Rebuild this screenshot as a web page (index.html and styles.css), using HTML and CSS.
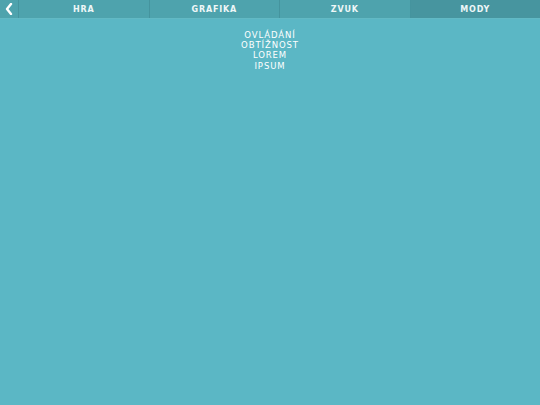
FILE: index.html
```html
<!DOCTYPE html>
<html>
<head>
<meta charset="utf-8">
<link rel="stylesheet" href="styles.css">
</head>
<body>
<div class="topbar">
  <div class="back"><svg width="8" height="12" viewBox="0 0 8 12"><path d="M6 1 L2 6 L6 11" fill="none" stroke="#ffffff" stroke-width="2.4" stroke-linecap="round" stroke-linejoin="round"/></svg></div>
  <div class="tab">HRA</div>
  <div class="tab">GRAFIKA</div>
  <div class="tab">ZVUK</div>
  <div class="tab active">MODY</div>
</div>
<div class="menu">
  <div class="item">OVLÁDÁNÍ</div>
  <div class="item">OBTÍŽNOST</div>
  <div class="item">LOREM</div>
  <div class="item">IPSUM</div>
</div>
</body>
</html>
```
FILE: styles.css
```css
html, body {
  margin: 0;
  padding: 0;
  width: 540px;
  height: 405px;
  background: #5bb7c5;
  font-family: "DejaVu Sans", "Verdana", sans-serif;
  color: #ffffff;
  overflow: hidden;
}
.topbar {
  display: flex;
  height: 18px;
  background: #4ea3ad;
  border-bottom: 1px solid #62b9c4;
}
.back {
  width: 19px;
  display: flex;
  align-items: center;
  justify-content: center;
  border-right: 1px solid #45949e;
  box-sizing: border-box;
}
.tab {
  flex: 1;
  display: flex;
  align-items: center;
  justify-content: center;
  font-size: 8px;
  font-weight: bold;
  letter-spacing: 0.8px;
  border-right: 1px solid #45949e;
  color: #eef7f8;
}
.tab:last-child { border-right: none; }
.tab.active { background: #47959f; }
.menu {
  display: flex;
  flex-direction: column;
  align-items: center;
  padding-top: 11px;
}
.item {
  font-size: 8.5px;
  line-height: 10.2px;
  letter-spacing: 0.9px;
  color: #ffffff;
}
```
